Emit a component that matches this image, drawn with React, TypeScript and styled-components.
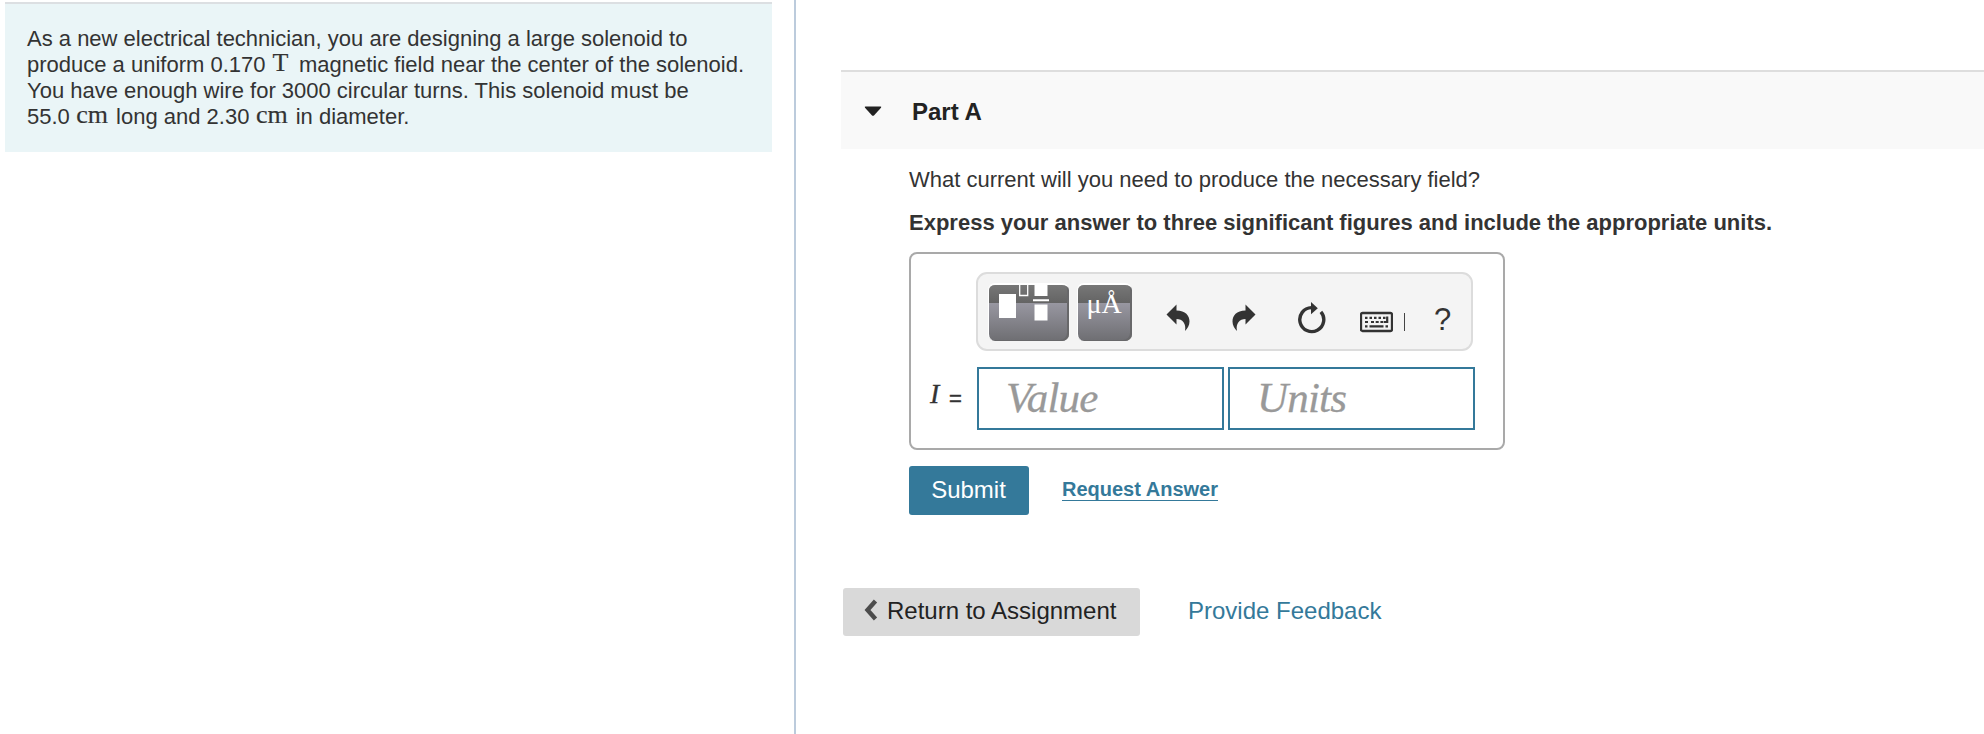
import React from 'react';
import styled, { createGlobalStyle } from 'styled-components';

const GlobalStyle = createGlobalStyle`
  * { box-sizing: border-box; }
  body {
    margin: 0;
    background: #fff;
    color: #333;
    font-family: "Liberation Sans", Arial, sans-serif;
    font-size: 22px;
    line-height: 26px;
    overflow: hidden;
  }
  p, h2 { margin: 0; }
  button { font: inherit; border: 0; padding: 0; background: none; cursor: pointer; }
`;

const Page = styled.div`
  display: flex;
  height: 734px;
`;

const ProblemPane = styled.aside`
  width: 796px;
  flex: none;
  padding: 2px 22px 0 5px;
  border-right: 2px solid #bccbdc;
`;

const ProblemText = styled.div`
  height: 150px;
  padding: 22px 0 0 22px;
  border-top: 2px solid #dcdfe2;
  background: #eaf5f7;
  white-space: nowrap;
`;

const MathUnit = styled.span<{ $before?: number; $after?: number }>`
  font-family: "Liberation Serif", "Times New Roman", serif;
  font-size: 26px;
  line-height: 0;
  margin: 0 ${p => p.$after ?? 8}px 0 ${p => p.$before ?? 6.5}px;
  -webkit-text-stroke: 0.2px currentColor;
  position: relative;
  top: -1px;
`;

const Main = styled.main`
  flex: 1;
  min-width: 0;
  padding: 70px 0 0 45px;
`;

const PartHeader = styled.header`
  display: flex;
  align-items: center;
  height: 79px;
  padding-left: 23px;
  border-top: 2px solid #dedede;
  background: #f9f9f9;
  svg { margin: 2px 30px 0 0; }
`;

const PartTitle = styled.h2`
  font-size: 24px;
  line-height: 28px;
  color: #222;
  margin-top: 2px;
`;

const PartBody = styled.section`
  padding: 18px 0 0 68px;
`;

const Instruction = styled.p`
  margin-top: 17px;
  font-weight: bold;
`;

const AnswerBox = styled.div`
  width: 596px;
  height: 198px;
  margin-top: 16px;
  padding: 18px 0 0 65px;
  border: 2px solid #a9a9a9;
  border-radius: 8px;
`;

const Toolbar = styled.div`
  display: flex;
  width: 497px;
  height: 79px;
  padding: 9px 0 0 10px;
  border: 2px solid #dcdcdc;
  border-radius: 11px;
  background: #f4f4f4;
`;

const PaletteButton = styled.button<{ $width: number }>`
  display: block;
  width: ${p => p.$width}px;
  height: 58px;
  margin-right: 8px;
  overflow: hidden;
  border: solid #fff;
  border-width: 2px 0 0 1px;
  border-radius: 7px;
  color: #fff;
  background: linear-gradient(#777 0, #646464 18px, #9897a1 18px, #6e6e72 100%);
  box-shadow: inset -2px -1px 0 #68686a;
  svg { display: block; }
`;

const UnitsGlyph = styled.span`
  display: block;
  height: 56px;
  font-family: "Liberation Serif", "Times New Roman", serif;
  font-size: 28px;
  line-height: 38px;
  padding-right: 2px;
  text-align: center;
`;

const ToolIcons = styled.div`
  display: flex;
  height: 40px;
  margin: 13px 0 0 25px;
  color: #333;
  svg { display: block; }
`;

const ToolButton = styled.button<{ $gap: number }>`
  display: block;
  height: 40px;
  margin-left: ${p => p.$gap}px;
  color: #333;
`;

const HelpButton = styled(ToolButton)`
  width: 17px;
  font-size: 31px;
  line-height: 40px;
  padding-top: 4px;
`;

const Separator = styled.span`
  width: 1px;
  height: 18px;
  margin: 17px 0 0 11px;
  background: #444;
`;

const Fields = styled.div`
  display: flex;
  gap: 4px;
  margin: 16px 0 0 -49px;
`;

const Variable = styled.label`
  display: flex;
  width: 46px;
  padding: 12px 0 0 3px;
  gap: 7px;
  line-height: 30px;
  i {
    width: 12px;
    font-family: "Liberation Serif", "Times New Roman", serif;
    font-size: 28px;
    -webkit-text-stroke: 0.3px currentColor;
  }
  span {
    padding-top: 5px;
    -webkit-text-stroke: 0.5px currentColor;
  }
`;

const Field = styled.input`
  width: 247px;
  height: 63px;
  padding: 0 0 2px 27px;
  border: 2px solid #34799a;
  border-radius: 0;
  outline: 0;
  background: #fff;
  font: italic 43px "Liberation Serif", "Times New Roman", serif;
  letter-spacing: -0.8px;
  color: #333;
  &::placeholder { color: #999; opacity: 1; -webkit-text-stroke: 0.3px #999; }
`;

const Actions = styled.div`
  display: flex;
  align-items: flex-start;
  margin-top: 16px;
`;

const SubmitButton = styled.button`
  width: 120px;
  height: 49px;
  padding: 0 1px 2px 0;
  border-radius: 3px;
  background: #34799a;
  color: #fff;
  font-size: 24px;
  line-height: 46px;
`;

const RequestLink = styled.a`
  margin: 12px 0 0 33px;
  border-bottom: 1px solid #34799a;
  color: #34799a;
  font-size: 20px;
  font-weight: bold;
  line-height: 22px;
`;

const Footer = styled.footer`
  display: flex;
  margin: 73px 0 0 2px;
  height: 48px;
  font-size: 24px;
  line-height: 46px;
`;

const ReturnButton = styled.button`
  display: flex;
  width: 297px;
  height: 48px;
  padding-left: 21px;
  border-radius: 3px;
  background: #d9d9d9;
  color: #222;
  line-height: 46px;
  svg { margin: 11px 9px 0 0; }
`;

const FeedbackLink = styled.a`
  margin-left: 48px;
  color: #34799a;
`;

const ArrowPath = () => (
  <path d="M0 10 10 0V6C19 6 23 11 23 17C23 21 21 24 18.5 26.5C20 19 16 14.5 10 14.5V20Z" fill="currentColor" />
);

const UndoIcon = () => (
  <svg width="24" height="40"><g transform="translate(0.5 8.5)"><ArrowPath /></g></svg>
);

const RedoIcon = () => (
  <svg width="24" height="40"><g transform="translate(23.5 8.5) scale(-1 1)"><ArrowPath /></g></svg>
);

const ResetIcon = () => (
  <svg width="28" height="40">
    <path d="M22.9 15.8A12 12 0 1 1 13.5 11.6" fill="none" stroke="currentColor" strokeWidth="3.4" />
    <path d="M13 6 19.8 12.2 13 18.2Z" fill="currentColor" />
  </svg>
);

const KeyboardIcon = () => (
  <svg width="33" height="40">
    <rect x="1" y="17" width="31" height="18" rx="1.5" fill="none" stroke="currentColor" strokeWidth="2.3" />
    <g fill="none" stroke="currentColor" strokeWidth="2.2">
      <path d="M5 21.8H26" strokeDasharray="2.5 2" />
      <path d="M5 26H8.5M11 26H24" strokeDasharray="3 1.7" />
      <path d="M5 30.3H7.5M9.5 30.3H23.5M25.5 30.3H28M27.2 20.5V26H24" />
    </g>
  </svg>
);

const TemplatesIcon = () => (
  <svg width="80" height="56" fill="#fff">
    <rect x="10" y="9" width="17" height="24" />
    <path d="M30.7 0V10.5H38.7V0" fill="none" stroke="#fff" strokeWidth="1.3" />
    <path d="M45.5 0H58.5V11H45.5ZM44 14.2H60V16.2H44ZM45.5 19.5H58.5V35.5H45.5Z" />
  </svg>
);

export default function App() {
  return (
    <>
      <GlobalStyle />
      <Page>
        <ProblemPane>
          <ProblemText>
            <p>As a new electrical technician, you are designing a large solenoid to</p>
            <p>produce a uniform 0.170<MathUnit $before={7} $after={10.5}>T</MathUnit>magnetic field near the center of the solenoid.</p>
            <p>You have enough wire for 3000 circular turns. This solenoid must be</p>
            <p>55.0<MathUnit>cm</MathUnit>long and 2.30<MathUnit>cm</MathUnit>in diameter.</p>
          </ProblemText>
        </ProblemPane>
        <Main>
          <PartHeader>
            <svg width="18" height="11"><path d="M1.6 0.5H16.4Q17.8 .5 17 1.8L10.2 9.2Q9 10.2 7.8 9.2L1 1.8Q.2 .5 1.6 .5Z" fill="#222" /></svg>
            <PartTitle>Part A</PartTitle>
          </PartHeader>
          <PartBody>
            <p>What current will you need to produce the necessary field?</p>
            <Instruction>Express your answer to three significant figures and include the appropriate units.</Instruction>
            <AnswerBox>
              <Toolbar>
                <PaletteButton $width={81} aria-label="Templates"><TemplatesIcon /></PaletteButton>
                <PaletteButton $width={55} aria-label="Symbols"><UnitsGlyph>μÅ</UnitsGlyph></PaletteButton>
                <ToolIcons>
                  <ToolButton $gap={1} aria-label="Undo"><UndoIcon /></ToolButton>
                  <ToolButton $gap={42} aria-label="Redo"><RedoIcon /></ToolButton>
                  <ToolButton $gap={42} aria-label="Reset"><ResetIcon /></ToolButton>
                  <ToolButton $gap={34} aria-label="Keyboard"><KeyboardIcon /></ToolButton>
                  <Separator />
                  <HelpButton $gap={29} aria-label="Help">?</HelpButton>
                </ToolIcons>
              </Toolbar>
              <Fields>
                <Variable><i>I</i><span>=</span></Variable>
                <Field placeholder="Value" />
                <Field placeholder="Units" />
              </Fields>
            </AnswerBox>
            <Actions>
              <SubmitButton>Submit</SubmitButton>
              <RequestLink>Request Answer</RequestLink>
            </Actions>
          </PartBody>
          <Footer>
            <ReturnButton>
              <svg width="14" height="26"><path d="M11.5 2 3.5 11 11.5 20" fill="none" stroke="#4c4c4c" strokeWidth="4.4" /></svg>
              Return to Assignment
            </ReturnButton>
            <FeedbackLink>Provide Feedback</FeedbackLink>
          </Footer>
        </Main>
      </Page>
    </>
  );
}
